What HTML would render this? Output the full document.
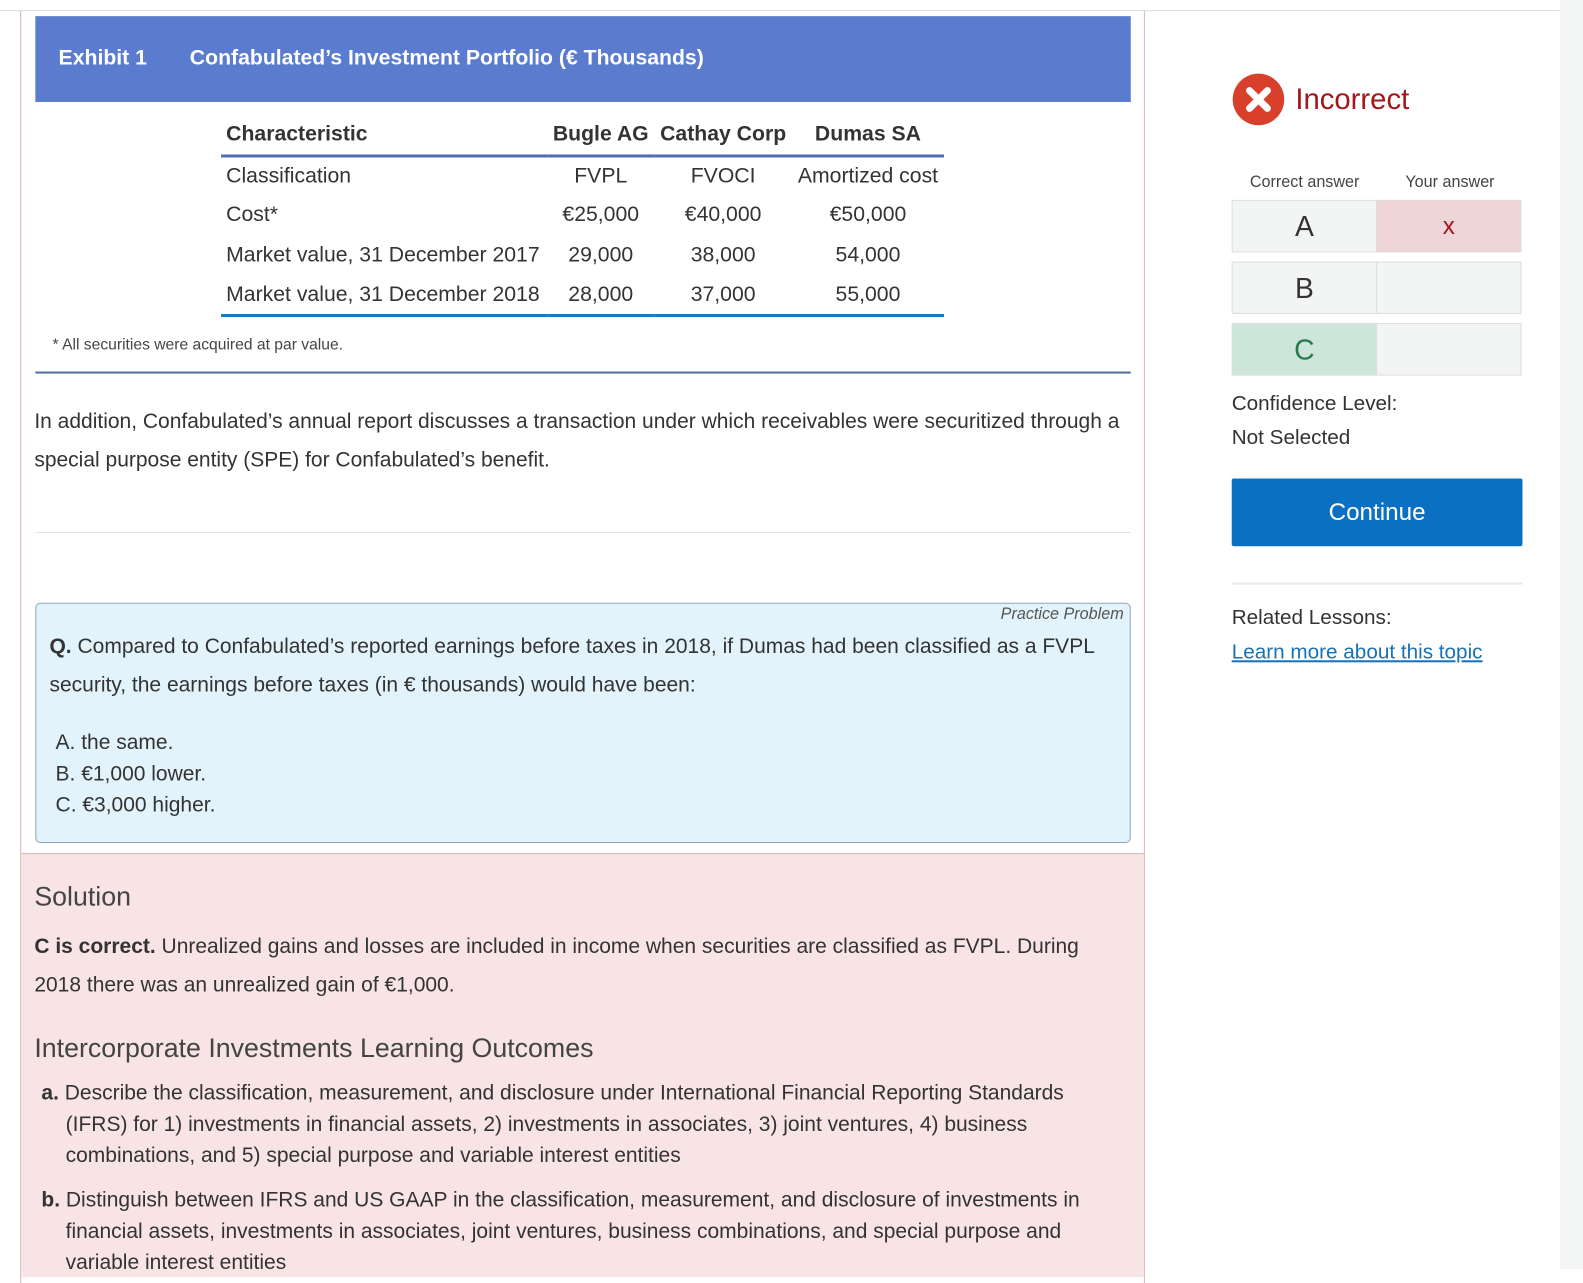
<!DOCTYPE html>
<html><head><meta charset="utf-8"><style>
*{margin:0;padding:0;box-sizing:border-box}
body{width:1583px;height:1257px;overflow:hidden;background:#fff;font-family:"Liberation Sans",sans-serif;color:#333;position:relative}
#w{position:absolute;left:0;top:0;width:1568px;height:1245px;transform:scale(1.0096);transform-origin:0 0}
.a{position:absolute}
.top{left:0;top:10px;width:1568px;height:1px;background:#ddd}
.rs{left:1545px;top:0;width:23px;height:1257px;background:#f4f6f6}
.panel{left:20px;top:11px;width:1114px;height:1260px;border-left:1px solid #d9b3ae;border-right:1px solid #d9b3ae}
.hdr{left:35px;top:16px;width:1085px;height:85px;background:#5b7bcf;color:#fff;font-weight:bold;font-size:21px}
.hdr span{position:absolute;top:30px}
table{border-collapse:collapse;font-size:21px}
.tb{left:219px;top:114px;width:716px}
td{height:39.5px;padding:0 5px;white-space:nowrap}
th{height:40px;text-align:left;padding:0 5px;border-bottom:3px solid #4f6cb5}
.c{text-align:center}
tr.last td{border-bottom:3px solid #1d7ab8}
.p{font-size:20.8px;line-height:38px}
.sol{left:21px;top:845px;width:1112px;height:420px;background:#f8e4e4;border-top:1px solid #dbb3ae}
.q{left:35px;top:597px;width:1085px;height:238px;background:#e2f3fc;border:1px solid #8ea6bb;border-radius:5px}
.tile{position:absolute;width:144px;height:52px;border:1px solid #ddd;background:#f3f5f5;font-size:28px;text-align:center;line-height:52px}
</style></head><body><div id="w">
<div class="a top"></div>
<div class="a rs"></div>
<div class="a panel"></div>
<div class="a hdr"><span style="left:23px">Exhibit 1</span><span style="left:153px">Confabulated’s Investment Portfolio (€ Thousands)</span></div>
<table class="a tb">
<tr><th style="width:323px">Characteristic</th><th style="text-align:center">Bugle AG</th><th style="text-align:center">Cathay Corp</th><th style="text-align:center">Dumas SA</th></tr>
<tr><td>Classification</td><td class="c">FVPL</td><td class="c">FVOCI</td><td class="c">Amortized cost</td></tr>
<tr><td>Cost*</td><td class="c">€25,000</td><td class="c">€40,000</td><td class="c">€50,000</td></tr>
<tr><td>Market value, 31 December 2017</td><td class="c">29,000</td><td class="c">38,000</td><td class="c">54,000</td></tr>
<tr class="last"><td>Market value, 31 December 2018</td><td class="c">28,000</td><td class="c">37,000</td><td class="c">55,000</td></tr>
</table>
<div class="a" style="left:52px;top:333px;font-size:15.5px;color:#444">* All securities were acquired at par value.</div>
<div class="a" style="left:35px;top:368px;width:1085px;height:2px;background:#4a6ea0"></div>
<div class="a p" style="left:34px;top:399px;width:1090px">In addition, Confabulated’s annual report discusses a transaction under which receivables were securitized through a special purpose entity (SPE) for Confabulated’s benefit.</div>
<div class="a" style="left:35px;top:527px;width:1085px;height:1px;background:#e2e2e2"></div>
<div class="a q">
<div class="a" style="right:6px;top:2px;font-size:16px;font-style:italic;color:#555">Practice Problem</div>
<div class="a p" style="left:13px;top:24px;width:1065px"><b>Q.</b> Compared to Confabulated’s reported earnings before taxes in 2018, if Dumas had been classified as a FVPL security, the earnings before taxes (in € thousands) would have been:</div>
<div class="a" style="left:19px;top:122px;font-size:20.8px;line-height:31px">A. the same.<br>B. €1,000 lower.<br>C. €3,000 higher.</div>
</div>
<div class="a sol">
<div class="a" style="left:13px;top:27px;font-size:26.5px;color:#444">Solution</div>
<div class="a p" style="left:13px;top:73px;width:1080px"><b>C is correct.</b> Unrealized gains and losses are included in income when securities are classified as FVPL. During 2018 there was an unrealized gain of €1,000.</div>
<div class="a" style="left:13px;top:177px;font-size:26.5px;color:#444">Intercorporate Investments Learning Outcomes</div>
<div class="a" style="left:20px;top:221px;width:1060px;font-size:20.8px;line-height:31px">
<div style="padding-left:24px;text-indent:-24px"><b>a.</b> Describe the classification, measurement, and disclosure under International Financial Reporting Standards (IFRS) for 1) investments in financial assets, 2) investments in associates, 3) joint ventures, 4) business combinations, and 5) special purpose and variable interest entities</div>
<div style="padding-left:24px;text-indent:-24px;margin-top:13px"><b>b.</b> Distinguish between IFRS and US GAAP in the classification, measurement, and disclosure of investments in financial assets, investments in associates, joint ventures, business combinations, and special purpose and variable interest entities</div>
</div>
</div>
<svg class="a" style="left:1220px;top:72px" width="53" height="53" viewBox="0 0 54 54"><circle cx="27" cy="27" r="26" fill="#d9402b"/><path d="M18 18L36 36M36 18L18 36" stroke="#fff" stroke-width="7" stroke-linecap="round"/></svg>
<div class="a" style="left:1283px;top:83px;font-size:29px;color:#a3161b">Incorrect</div>
<div class="a" style="left:1238px;top:172px;font-size:16px;color:#444">Correct answer</div>
<div class="a" style="left:1392px;top:172px;font-size:16px;color:#444">Your answer</div>
<div class="tile" style="left:1220px;top:198px">A</div>
<div class="tile" style="left:1363px;top:198px;background:#f0d5d8;color:#a3161b;font-size:24px">x</div>
<div class="tile" style="left:1220px;top:259px">B</div>
<div class="tile" style="left:1363px;top:259px"></div>
<div class="tile" style="left:1220px;top:320px;background:#cde6dc;color:#257a4c">C</div>
<div class="tile" style="left:1363px;top:320px"></div>
<div class="a" style="left:1220px;top:383px;font-size:20.5px;line-height:34px">Confidence Level:<br>Not Selected</div>
<div class="a" style="left:1220px;top:474px;width:288px;height:67px;background:#0b70c1;border-radius:2px;color:#fff;font-size:24px;text-align:center;line-height:67px">Continue</div>
<div class="a" style="left:1220px;top:577px;width:288px;height:2px;background:#e8e8e8"></div>
<div class="a" style="left:1220px;top:595px;font-size:20.5px;line-height:34px">Related Lessons:<br><span style="color:#1672b8;text-decoration:underline">Learn more about this topic</span></div>
</div></body></html>
